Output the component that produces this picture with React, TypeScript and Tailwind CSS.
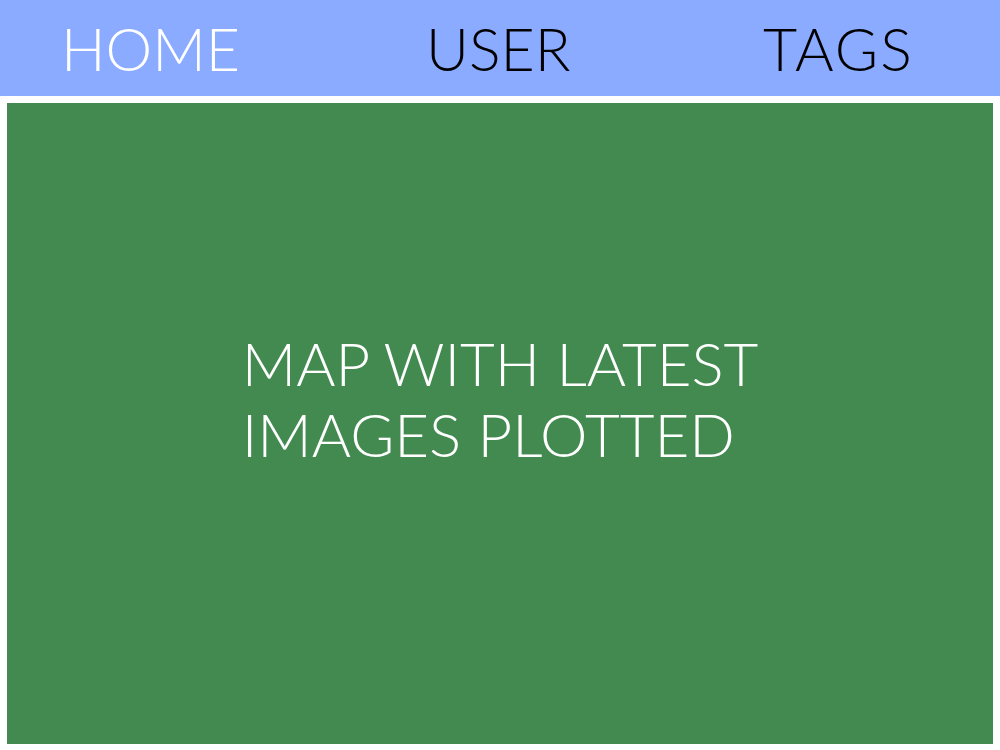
import React from "react";

export default function App() {
  return (
    <div className="w-[1000px] h-[750px] bg-white flex flex-col" style={{ fontFamily: "Lato, 'Open Sans', sans-serif" }}>
      <div className="h-[96px] bg-[#8aabff] flex items-center text-[59px] font-light leading-none">
        <div className="w-[426px] pl-[61px] text-white">HOME</div>
        <div className="w-[337px] text-black">USER</div>
        <div className="flex-1 text-black tracking-[2px]">TAGS</div>
      </div>
      <div className="mt-[7px] mx-[7px] h-[641px] bg-[#428a4f] flex items-center justify-center pb-[50px]">
        <div className="text-white text-[60px] font-light leading-[71px] text-left">
          MAP WITH LATEST
          <br />
          IMAGES PLOTTED
        </div>
      </div>
    </div>
  );
}
